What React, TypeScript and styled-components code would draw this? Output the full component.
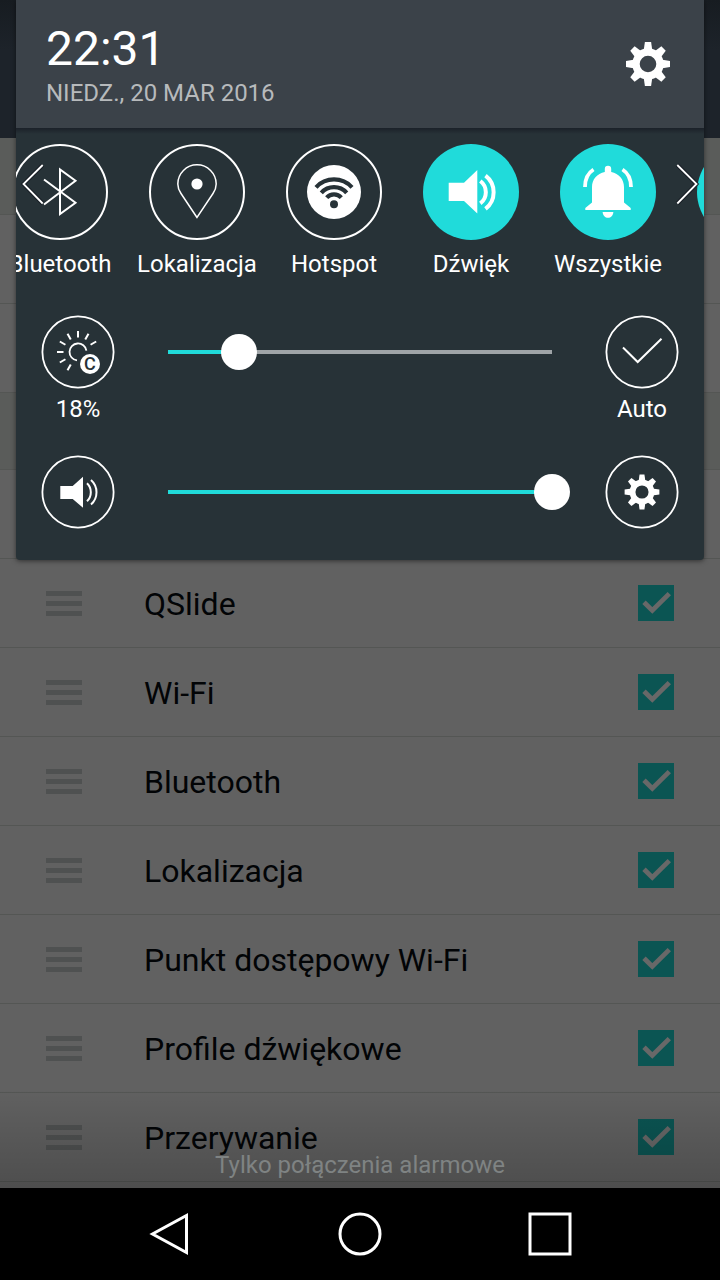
import React, { useState } from "react";
import styled, { createGlobalStyle } from "styled-components";

const teal = "#20dbda";
const panelColor = "#273237";

const GlobalStyle = createGlobalStyle`
  * { box-sizing: border-box; }
  body { margin: 0; background: #000; font-family: Roboto, "Noto Sans", sans-serif; }
  button { margin: 0; padding: 0; border: 0; background: none; color: inherit; font: inherit; }
  svg { display: block; }
`;

const Screen = styled.div`
  display: flex;
  flex-direction: column;
  min-height: 100vh;
`;

const Stage = styled.main`
  position: relative;
  flex: 1;
  display: grid;
  grid-template-columns: minmax(0, 1fr);
  align-items: start;
  overflow: hidden;
  background: #616161;
`;

const Backdrop = styled.section`
  grid-area: 1 / 1;
`;

const AppBar = styled.div`
  height: 138px;
  background: linear-gradient(#171c21, #1d232a 50px);
`;

const Band = styled.div`
  height: 77px;
  background: #5a5c5a;
  border-bottom: 1px solid #545654;
`;

const List = styled.ul`
  margin: 0;
  padding: 0;
  list-style: none;
`;

const Row = styled.li`
  display: flex;
  align-items: center;
  height: 89px;
  padding: 0 46px;
  border-bottom: 1px solid #545654;
`;

const Handle = styled.span`
  display: grid;
  gap: 5px;
  width: 36px;
  margin-right: 62px;
`;

const Bar = styled.span`
  height: 5px;
  background: #4f5151;
`;

const RowLabel = styled.label`
  flex: 1;
  padding-top: 2px;
  font-size: 32px;
  line-height: 38px;
  color: #020406;
`;

const TickBox = styled.span`
  display: grid;
  width: 36px;
  height: 36px;

  > * { grid-area: 1 / 1; }
  svg { pointer-events: none; }
`;

const Tick = styled.input`
  appearance: none;
  width: 36px;
  height: 36px;
  margin: 0;
  background: #4c4e50;

  &:checked { background: #0b5553; }
  &:not(:checked) + svg { visibility: hidden; }
`;

const Footer = styled.div`
  position: absolute;
  left: 0;
  right: 0;
  bottom: 0;
  display: flex;
  justify-content: center;
  align-items: flex-end;
  height: 100px;
  padding-bottom: 9px;
  background: linear-gradient(rgba(0, 0, 0, 0), rgba(0, 0, 0, 0.2));
  color: #7f8383;
  font-size: 24px;
  line-height: 28px;
  pointer-events: none;
`;

const Panel = styled.section`
  grid-area: 1 / 1;
  position: relative;
  margin: 0 16px;
  padding-bottom: 31px;
  border-radius: 0 0 4px 4px;
  background: ${panelColor};
  box-shadow: 0 1px 5px rgba(0, 0, 0, 0.5);
  color: #fff;
  font-size: 24px;
  line-height: 28px;
`;

const Header = styled.header`
  display: flex;
  justify-content: space-between;
  align-items: center;
  height: 128px;
  padding: 0 34px 0 30px;
  background: #3b4249;
`;

const Time = styled.div`
  font-size: 48px;
  line-height: 56px;
`;

const DateText = styled.div`
  margin-top: 2px;
  color: #b7babc;
`;

const TileArea = styled.div`
  position: relative;
  background: linear-gradient(#1b2129, ${panelColor} 6px);
`;

const Tiles = styled.div`
  display: flex;
  gap: 41px;
  overflow: hidden;
  padding: 16px 0 0;
`;

const Tile = styled.button`
  flex: none;
  display: flex;
  flex-direction: column;
  align-items: center;
  gap: 10px;
  width: 96px;
  height: 134px;
  white-space: nowrap;

  &:first-child { margin-left: -4px; }
`;

const Arrow = styled.button<{ $side: "left" | "right" }>`
  position: absolute;
  top: 34px;
  ${(p) => p.$side}: 4px;
`;

const SliderRow = styled.div<{ $top: number }>`
  display: flex;
  align-items: flex-start;
  gap: 35px;
  margin-top: ${(p) => p.$top}px;
  padding: 0 25px;
`;

const Round = styled.button`
  flex: none;
  display: flex;
  flex-direction: column;
  align-items: center;
  gap: 6px;
  width: 74px;
`;

const Slider = styled.input`
  appearance: none;
  flex: 1;
  min-width: 0;
  height: 74px;
  margin: 0;
  background: none;

  &::-webkit-slider-runnable-track {
    height: 4px;
    background: linear-gradient(
      to right,
      transparent 18px,
      ${teal} 18px,
      ${teal} calc(18px + (100% - 36px) * var(--level)),
      #9fa4a7 calc(18px + (100% - 36px) * var(--level)),
      #9fa4a7 calc(100% - 18px),
      transparent calc(100% - 18px)
    );
  }

  &::-webkit-slider-thumb {
    appearance: none;
    width: 36px;
    height: 36px;
    margin-top: -16px;
    border-radius: 50%;
    background: #fff;
  }
`;

const NavBar = styled.nav`
  display: grid;
  grid-template-columns: repeat(3, 1fr);
  height: 92px;
  padding: 0 75px;
  background: #000;
`;

const NavButton = styled.button`
  display: flex;
  align-items: center;
  justify-content: center;
`;

function Teeth() {
  return (
    <>
      {[0, 45, 90, 135, 180, 225, 270, 315].map((a) => (
        <path key={a} d="M-4.4-13L-3.1-22H3.1L4.4-13Z" transform={`rotate(${a})`} fill="#fff" />
      ))}
      <circle r="12" fill="none" stroke="#fff" strokeWidth="7.4" />
    </>
  );
}

function GearIcon() {
  return (
    <svg width="44" height="44" viewBox="-22 -22 44 44">
      <Teeth />
    </svg>
  );
}

function TileIcon({ on, children }: { on?: boolean; children?: React.ReactNode }) {
  return (
    <svg width="96" height="96" viewBox="0 0 96 96" fill="none" stroke="#fff" strokeWidth="2">
      {on ? <circle cx="48" cy="48" r="48" fill={teal} stroke="none" /> : <circle cx="48" cy="48" r="47" />}
      {children}
    </svg>
  );
}

function Ring({ children }: { children: React.ReactNode }) {
  return (
    <svg width="74" height="74" viewBox="0 0 74 74" fill="none" stroke="#fff" strokeWidth="2">
      <circle cx="37" cy="37" r="35.6" strokeWidth="1.8" />
      {children}
    </svg>
  );
}

const tiles = [
  {
    label: "Bluetooth",
    on: false,
    icon: <path d="M32 35.5L63.5 58.7L48 70V25.5L63.5 36.7L32 60.5" />,
  },
  {
    label: "Lokalizacja",
    on: false,
    icon: (
      <>
        <path
          d="M48 73.5L32 49.5C29.6 46 28.8 43 28.8 40A19.2 19.2 0 0 1 67.2 40C67.2 43 66.4 46 64 49.5Z"
          strokeWidth="1.5"
        />
        <circle cx="48" cy="40" r="5.6" fill="#fff" stroke="none" />
      </>
    ),
  },
  {
    label: "Hotspot",
    on: false,
    icon: (
      <>
        <circle cx="48" cy="48" r="27" fill="#fff" stroke="none" />
        <g stroke={panelColor} strokeWidth="4.2">
          <path d="M30 43.3A24.5 24.5 0 0 1 66 43.3" />
          <path d="M35.3 48.8A17 17 0 0 1 60.7 48.8" />
          <path d="M40.7 53.6A9.8 9.8 0 0 1 55.3 53.6" />
        </g>
        <circle cx="48" cy="60.2" r="4" fill={panelColor} stroke="none" />
      </>
    ),
  },
  {
    label: "Dźwięk",
    on: true,
    icon: (
      <>
        <path d="M25.7 38.7H41L54.3 26V69.5L41 57H25.7Z" fill="#fff" stroke="none" />
        <path d="M57.3 37A14 14 0 0 1 57.3 59.3" strokeWidth="4" />
        <path d="M62.5 31.6A21 21 0 0 1 62.5 64.8" strokeWidth="4" />
      </>
    ),
  },
  {
    label: "Wszystkie",
    on: true,
    icon: (
      <>
        <path
          d="M44.8 28V25A3.2 3.2 0 0 1 51.2 25V28C59 29.5 64 35.5 64 43V58.5L70.7 64V66H25.3V64L32 58.5V43C32 35.5 37 29.5 44.8 28Z"
          fill="#fff"
          stroke="none"
        />
        <path d="M42.6 68H53.4C53 71.8 50.8 73.8 48 73.8S43 71.8 42.6 68Z" fill="#fff" stroke="none" />
        <path d="M33.5 25.5C28 29 25 35 25 43M62.5 25.5C68 29 71 35 71 43" strokeWidth="3.8" />
      </>
    ),
  },
];

const rows = ["QSlide", "Wi-Fi", "Bluetooth", "Lokalizacja", "Punkt dostępowy Wi-Fi", "Profile dźwiękowe", "Przerywanie"];

function ArrowIcon({ d }: { d: string }) {
  return (
    <svg width="26" height="44" viewBox="0 0 26 44" fill="none">
      <path d={d} stroke="#151a22" strokeOpacity="0.8" strokeWidth="4" />
      <path d={d} stroke="#fff" strokeWidth="1.8" />
    </svg>
  );
}

function Range({ label, max, initial }: { label: string; max: number; initial: number }) {
  const [value, setValue] = useState(initial);
  return (
    <Slider
      type="range"
      aria-label={label}
      min={0}
      max={max}
      value={value}
      onChange={(e) => setValue(Number(e.target.value))}
      style={{ "--level": value / max } as React.CSSProperties}
    />
  );
}

export default function App() {
  return (
    <Screen>
      <GlobalStyle />
      <Stage>
        <Backdrop>
          <AppBar />
          <Band />
          <List>
            <Row />
            <Row />
          </List>
          <Band />
          <List>
            <Row />
            {rows.map((name, i) => (
              <Row key={name}>
                <Handle>
                  <Bar />
                  <Bar />
                  <Bar />
                </Handle>
                <RowLabel htmlFor={`row-${i}`}>{name}</RowLabel>
                <TickBox>
                  <Tick type="checkbox" id={`row-${i}`} defaultChecked />
                  <svg width="36" height="36" viewBox="0 0 36 36" fill="none">
                    <path d="M6 17.2L14.3 25.4L31.3 8.6" stroke="#686868" strokeWidth="4.8" />
                  </svg>
                </TickBox>
              </Row>
            ))}
          </List>
        </Backdrop>

        <Panel>
          <Header>
            <div>
              <Time>22:31</Time>
              <DateText>NIEDZ., 20 MAR 2016</DateText>
            </div>
            <button aria-label="Ustawienia">
              <GearIcon />
            </button>
          </Header>

          <TileArea>
            <Tiles>
              {tiles.map((t) => (
                <Tile key={t.label}>
                  <TileIcon on={t.on}>{t.icon}</TileIcon>
                  <span>{t.label}</span>
                </Tile>
              ))}
              <Tile aria-label="Tryb">
                <TileIcon on />
              </Tile>
            </Tiles>
            <Arrow $side="left" aria-label="Poprzednie">
              <ArrowIcon d="M22.7 3L3.5 22L22.7 41.5" />
            </Arrow>
            <Arrow $side="right" aria-label="Następne">
              <ArrowIcon d="M3.3 3L22.5 22L3.3 41.5" />
            </Arrow>
          </TileArea>

          <SliderRow $top={37}>
            <Round>
              <Ring>
                {[0, 30, 60, -30, -60, -90, -120, -150].map((a) => (
                  <path key={a} d="M37 16V22.5" transform={`rotate(${a} 37 37)`} />
                ))}
                <path d="M45.4 35.6A8.5 8.5 0 1 0 36 45.4" strokeWidth="1.8" />
                <circle cx="49" cy="49" r="10" fill="#fff" stroke="none" />
                <text
                  x="49"
                  y="55"
                  textAnchor="middle"
                  fontSize="18"
                  fontWeight="500"
                  fill={panelColor}
                  stroke="none"
                >
                  C
                </text>
              </Ring>
              <span>18%</span>
            </Round>
            <Range label="Jasność" max={255} initial={47} />
            <Round>
              <Ring>
                <path d="M18 32.5L32.7 47L56.5 23.8" />
              </Ring>
              <span>Auto</span>
            </Round>
          </SliderRow>

          <SliderRow $top={32}>
            <Round aria-label="Dźwięk">
              <Ring>
                <path d="M19.3 31H31.7L42 21.7V52.7L31.7 44H19.3Z" fill="#fff" stroke="none" />
                <path d="M46 28.3A12.5 12.5 0 0 1 46 46.3M50 25A16.5 16.5 0 0 1 50 49.6" strokeWidth="2" />
              </Ring>
            </Round>
            <Range label="Głośność" max={15} initial={15} />
            <Round aria-label="Ustawienia dźwięku">
              <Ring>
                <g transform="translate(37 37) scale(0.79)" strokeWidth="0">
                  <Teeth />
                </g>
              </Ring>
            </Round>
          </SliderRow>
        </Panel>

        <Footer>Tylko połączenia alarmowe</Footer>
      </Stage>

      <NavBar>
        <NavButton aria-label="Wstecz">
          <svg width="44" height="44" viewBox="0 0 44 44" fill="none" stroke="#fff" strokeWidth="3">
            <path d="M38.5 3.5V40.5L4.5 22Z" />
          </svg>
        </NavButton>
        <NavButton aria-label="Ekran główny">
          <svg width="44" height="44" viewBox="0 0 44 44" fill="none" stroke="#fff" strokeWidth="3">
            <circle cx="22" cy="22" r="20" />
          </svg>
        </NavButton>
        <NavButton aria-label="Ostatnie">
          <svg width="44" height="44" viewBox="0 0 44 44" fill="none" stroke="#fff" strokeWidth="3">
            <path d="M2 2H42V42H2Z" />
          </svg>
        </NavButton>
      </NavBar>
    </Screen>
  );
}
